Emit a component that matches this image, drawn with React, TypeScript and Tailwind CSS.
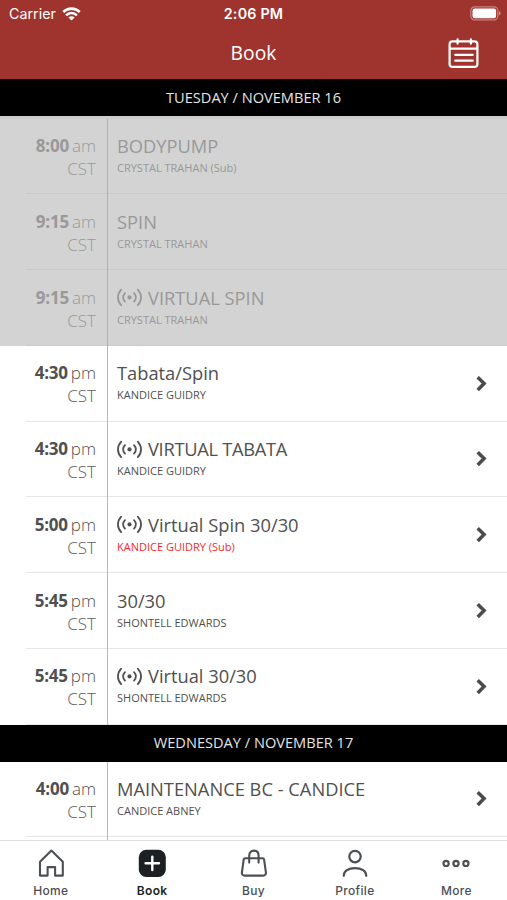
import React from 'react';

type ClassItem = {
  time: string;
  period: string;
  title: string;
  instructor: string;
  virtual?: boolean;
  sub?: boolean;
  past?: boolean;
  tight?: boolean;
};

const tuesday: ClassItem[] = [
  { time: '8:00', period: 'am', title: 'BODYPUMP', instructor: 'CRYSTAL TRAHAN (Sub)', past: true },
  { time: '9:15', period: 'am', title: 'SPIN', instructor: 'CRYSTAL TRAHAN', past: true },
  { time: '9:15', period: 'am', title: 'VIRTUAL SPIN', instructor: 'CRYSTAL TRAHAN', virtual: true, past: true },
  { time: '4:30', period: 'pm', title: 'Tabata/Spin', instructor: 'KANDICE GUIDRY' },
  { time: '4:30', period: 'pm', title: 'VIRTUAL TABATA', instructor: 'KANDICE GUIDRY', virtual: true, tight: true },
  { time: '5:00', period: 'pm', title: 'Virtual Spin 30/30', instructor: 'KANDICE GUIDRY (Sub)', virtual: true, sub: true },
  { time: '5:45', period: 'pm', title: '30/30', instructor: 'SHONTELL EDWARDS' },
  { time: '5:45', period: 'pm', title: 'Virtual 30/30', instructor: 'SHONTELL EDWARDS', virtual: true },
];

const wednesday: ClassItem[] = [
  { time: '4:00', period: 'am', title: 'MAINTENANCE BC - CANDICE', instructor: 'CANDICE ABNEY' },
];

function WifiIcon() {
  return (
    <svg width="19" height="14" viewBox="0 0 19 14" fill="none" stroke="#fff" strokeWidth="2.6">
      <path d="M1.2 5a11.8 11.8 0 0 1 16.6 0" />
      <path d="M4.1 8.3a7.6 7.6 0 0 1 10.8 0" />
      <path d="M9.5 13.6 6.4 10.5a4.4 4.4 0 0 1 6.2 0z" fill="#fff" stroke="none" />
    </svg>
  );
}

function BatteryIcon() {
  return (
    <svg width="31" height="15" viewBox="0 0 31 15" fill="none">
      <rect x="0.8" y="0.9" width="27" height="13" rx="3.8" stroke="#fff" strokeOpacity="0.4" strokeWidth="1.2" />
      <rect x="2.5" y="2.6" width="23.6" height="9.6" rx="2.2" fill="#fff" />
      <path d="M29 5.2c1 .4 1.5 1.1 1.5 2.1s-.5 1.7-1.5 2.1z" fill="#fff" fillOpacity="0.5" />
    </svg>
  );
}

function CalendarIcon() {
  return (
    <svg width="31" height="31" viewBox="0 0 31 31" fill="none" stroke="#fff" strokeWidth="2.2" strokeLinecap="round">
      <rect x="1.6" y="3.3" width="27.8" height="25.6" rx="3" />
      <path d="M2 10.7h27M9.6 1.3v4.4M22.9 1.3v4.4M7.2 16.8h17.6M7.2 22.7h17.6" />
    </svg>
  );
}

function BroadcastIcon() {
  return (
    <svg width="25" height="19" viewBox="0 0 25 19" fill="none" stroke="currentColor" strokeWidth="1.8" strokeLinecap="round">
      <circle cx="12.5" cy="9.4" r="2.1" fill="currentColor" stroke="none" />
      <path d="M8 5.2c-2.3 2.5-2.3 5.9 0 8.4M17 5.2c2.3 2.5 2.3 5.9 0 8.4" />
      <path d="M4.2 1.6c-4.3 4.6-4.3 11 0 15.6M20.8 1.6c4.3 4.6 4.3 11 0 15.6" />
    </svg>
  );
}

function ChevronIcon() {
  return (
    <svg width="11" height="17" viewBox="0 0 11 17" fill="none" stroke="#4b4b4b" strokeWidth="3.5">
      <path d="M1.7 2.2 8.1 8.6l-6.4 6.4" />
    </svg>
  );
}

function HomeIcon() {
  return (
    <svg width="28" height="30" viewBox="0 0 28 30" fill="none" stroke="#4c4f53" strokeWidth="2.1" strokeLinejoin="round">
      <path d="M14.4 2.6 3 13.8v13.8h7.6v-8.5h7.5v8.5h7.7V13.8z" />
    </svg>
  );
}

function BookIcon() {
  return (
    <svg width="28" height="30" viewBox="0 0 28 30" fill="none">
      <rect x="0.8" y="1.7" width="27" height="27.3" rx="7.5" fill="#1c1f23" />
      <path d="M14.3 8.6v13.4M7.6 15.3H21" stroke="#fff" strokeWidth="2.4" strokeLinecap="round" />
    </svg>
  );
}

function BagIcon() {
  return (
    <svg width="28" height="30" viewBox="0 0 28 30" fill="none" stroke="#4c4f53" strokeWidth="2.1" strokeLinecap="round" strokeLinejoin="round">
      <path d="M5.3 10.2h17.2c.9 0 1.5.5 1.6 1.4l1.8 12.8c.2 1.8-.8 3.2-2.7 3.2H4.6c-1.9 0-2.9-1.4-2.7-3.2l1.8-12.8c.1-.9.7-1.4 1.6-1.4z" />
      <path d="M9.2 14.6V7.7c0-3.1 1.9-5.1 4.7-5.1s4.7 2 4.7 5.1v6.9" />
    </svg>
  );
}

function ProfileIcon() {
  return (
    <svg width="28" height="30" viewBox="0 0 28 30" fill="none" stroke="#4c4f53" strokeWidth="2.2" strokeLinecap="round">
      <circle cx="14" cy="8.6" r="5.7" />
      <path d="M2.8 27.8c0-4.7 4.5-7.7 11.2-7.7s11.2 3 11.2 7.7" />
    </svg>
  );
}

function MoreIcon() {
  return (
    <svg width="28" height="30" viewBox="0 0 28 30" fill="none" stroke="#4c4f53" strokeWidth="2.2">
      <circle cx="4.1" cy="15.4" r="2.6" />
      <circle cx="14" cy="15.4" r="2.6" />
      <circle cx="23.9" cy="15.4" r="2.6" />
    </svg>
  );
}

function DayHeader({ label }: { label: string }) {
  return (
    <div className="h-[37px] shrink-0 bg-black flex items-center justify-center text-[14.6px] text-[#e4e4e4]">
      {label}
    </div>
  );
}

function ClassRow({ item }: { item: ClassItem }) {
  return (
    <div className={`h-[75.75px] shrink-0 flex pl-[26px] ${item.past ? 'bg-[#d3d3d3] text-[#999]' : 'bg-white text-[#505050]'}`}>
      <div className={`flex-1 flex border-b ${item.past ? 'border-[#c9c9c9]' : 'border-[#e6e6e6]'}`}>
        <div
          className={`w-[81.5px] -mb-px border-r pt-[15.5px] pr-[10.5px] text-right text-[17px] leading-[23px] whitespace-nowrap font-light
                      ${item.past ? 'border-[#b0b0b0]' : 'border-[#b8b8b8]'}`}
        >
          <div className="flex justify-end gap-[3px]">
            <span className="font-bold tracking-[-0.2px]">{item.time}</span>
            <span>{item.period}</span>
          </div>
          <div className={item.past ? '' : 'text-[#5c5c5c]'}>CST</div>
        </div>
        <div className="flex-1 pl-[9.5px] pt-[15.5px]">
          <div className="flex items-center gap-[6px] h-[24px] text-[18.3px] leading-[24px] whitespace-nowrap">
            {item.virtual && <BroadcastIcon />}
            <span className={item.tight ? 'tracking-[-0.3px]' : ''}>{item.title}</span>
          </div>
          <div className={`text-[11px] leading-[20px] ${item.sub ? 'text-[#fa2a2a]' : ''}`}>
            {item.instructor}
          </div>
        </div>
        {!item.past && (
          <div className="flex items-center pr-[20px]">
            <ChevronIcon />
          </div>
        )}
      </div>
    </div>
  );
}

function Tab({ label, icon, active }: { label: string; icon: React.ReactNode; active?: boolean }) {
  return (
    <div className="flex-1 flex flex-col items-center pt-[7px]">
      {icon}
      <span
        className={`mt-[5px] font-['Inter',sans-serif] text-[12px] leading-[16px] tracking-[0.3px]
                    ${active ? 'font-semibold text-[#1c1f23]' : 'font-medium text-[#4c4f53]'}`}
      >
        {label}
      </span>
    </div>
  );
}

function App() {
  return (
    <div className="w-[507px] h-[900px] flex flex-col overflow-hidden bg-white font-['Open_Sans',sans-serif]">
      <header className="h-[79px] shrink-0 bg-[#9f332e] text-white">
        <div className="h-[27px] grid grid-cols-3 items-center pl-[9px] pr-[6px] font-['Inter',sans-serif] text-[14.3px]">
          <div className="flex items-center gap-[6px]">
            <span>Carrier</span>
            <WifiIcon />
          </div>
          <div className="text-center font-semibold -ml-[3px] tracking-[0.2px]">2:06 PM</div>
          <div className="flex justify-end">
            <BatteryIcon />
          </div>
        </div>
        <div className="h-[52px] grid grid-cols-3 items-center pr-[28px] pl-[28px]">
          <span />
          <h1 className="text-center text-[19.3px]">Book</h1>
          <div className="flex justify-end">
            <CalendarIcon />
          </div>
        </div>
      </header>

      <main className="h-[761px] shrink-0 flex flex-col overflow-hidden">
        <DayHeader label="TUESDAY / NOVEMBER 16" />
        <div className="h-[2.5px] shrink-0 bg-[#cdcdcd]" />
        {tuesday.map((item, i) => (
          <ClassRow key={i} item={item} />
        ))}
        <DayHeader label="WEDNESDAY / NOVEMBER 17" />
        {wednesday.map((item, i) => (
          <ClassRow key={i} item={item} />
        ))}
        {/* top edge of the next row, cut off by the tab bar */}
        <div className="flex-1 pl-[26px]">
          <div className="w-[81.5px] h-full border-r border-[#b8b8b8]" />
        </div>
      </main>

      <nav className="flex-1 flex border-t border-[#dedede] bg-white">
        <Tab label="Home" icon={<HomeIcon />} />
        <Tab label="Book" icon={<BookIcon />} active />
        <Tab label="Buy" icon={<BagIcon />} />
        <Tab label="Profile" icon={<ProfileIcon />} />
        <Tab label="More" icon={<MoreIcon />} />
      </nav>
    </div>
  );
}

export default App;
